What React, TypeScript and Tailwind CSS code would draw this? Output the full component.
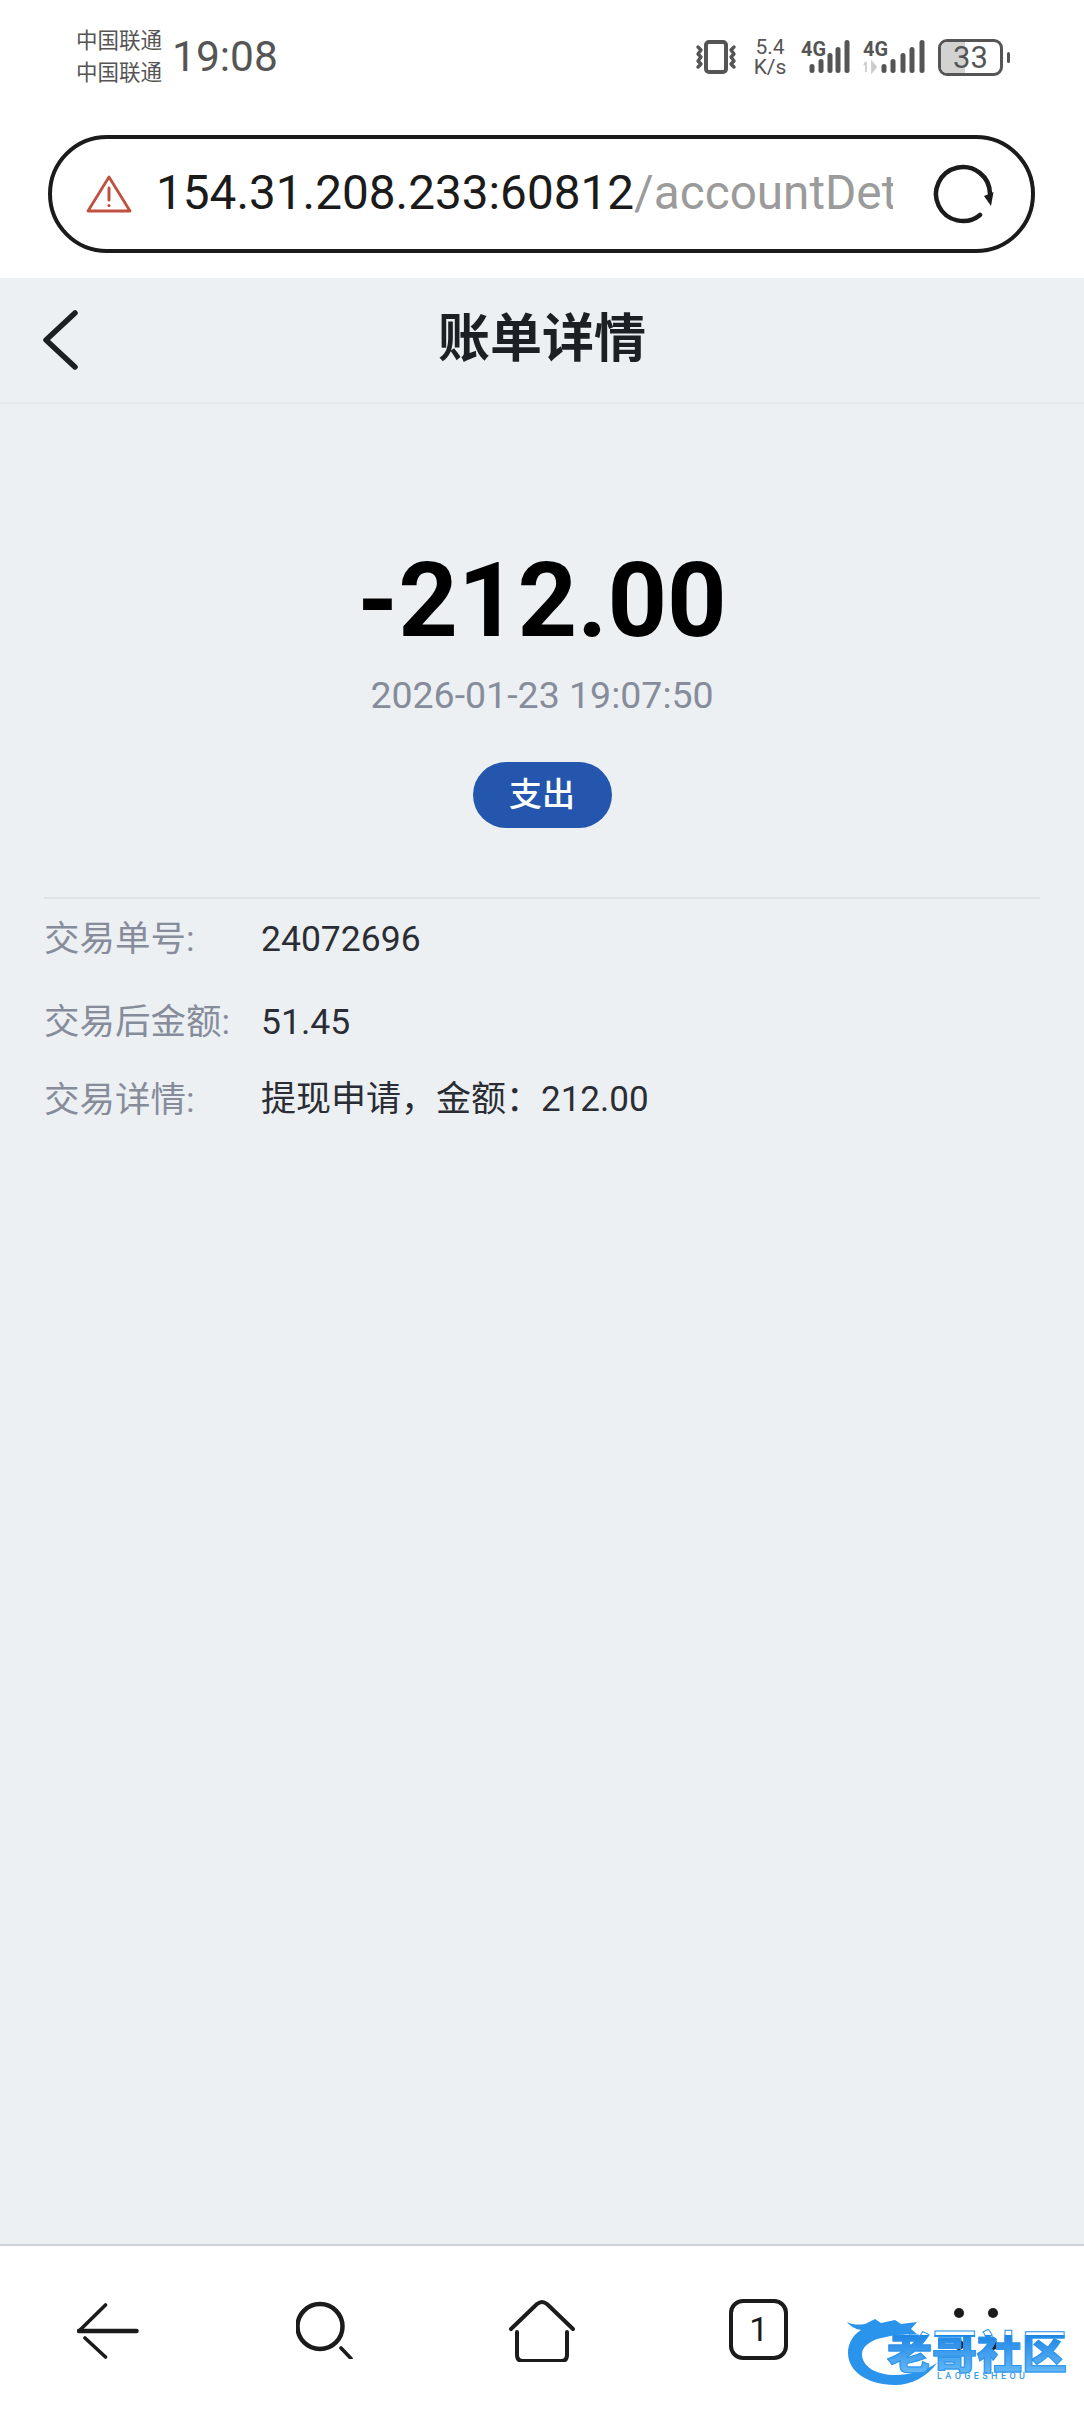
const font = "[font-family:Roboto,'Noto_Sans_CJK_SC',sans-serif]";

function Signal({ activity }: { activity?: boolean }) {
  const bars = activity
    ? [
        { x: 21, h: 9 },
        { x: 30, h: 14 },
        { x: 40, h: 20 },
        { x: 49, h: 26 },
        { x: 59, h: 33 },
      ]
    : [
        { x: 11, h: 9 },
        { x: 20, h: 14 },
        { x: 29, h: 20 },
        { x: 37, h: 26 },
        { x: 46, h: 33 },
      ];
  return (
    <svg width={activity ? 62 : 49} height="36" viewBox={activity ? "0 0 62 36" : "0 0 49 36"}>
      {bars.map((b) => (
        <rect key={b.x} x={b.x - 2.5} y={34 - b.h} width="5" height={b.h} rx="2.5" fill="#555" />
      ))}
      <text x="0" y="17" fontSize="20" fontWeight="700" fill="#555" fontFamily="Roboto, sans-serif" textLength="25" lengthAdjust="spacingAndGlyphs">
        4G
      </text>
      {activity && (
        <path d="M3 33v-10M1 26l2-3M9 23v10l4-5z" stroke="#ccc" strokeWidth="1.8" fill="#ccc" />
      )}
    </svg>
  );
}

function Vibrate() {
  return (
    <svg width="42" height="34" viewBox="0 0 42 34" fill="none" stroke="#555">
      <rect x="11" y="2" width="20" height="30" rx="3" strokeWidth="4" />
      <path d="M3 7l3 3-3 4 3 3-3 4 3 3-3 3" strokeWidth="3.4" strokeLinecap="round" strokeLinejoin="round" />
      <path d="M39 7l-3 3 3 4-3 3 3 4-3 3 3 3" strokeWidth="3.4" strokeLinecap="round" strokeLinejoin="round" />
    </svg>
  );
}

function Battery() {
  return (
    <div className="flex items-center gap-[4px]">
      <div className="relative flex h-[37px] w-[65px] items-center justify-center overflow-hidden rounded-[9px] border-[3px] border-[#555]">
        <div className="absolute inset-y-0 left-0 w-[24px] bg-[#d2d2d2]" />
        <span className="relative text-[31px] leading-none text-[#555]">33</span>
      </div>
      <div className="h-[11px] w-[3px] rounded-sm bg-[#555]" />
    </div>
  );
}

function StatusBar() {
  return (
    <div className="flex h-[114px] items-center pl-[76px] pr-[74px] text-[#555]">
      <div className="w-[88px] text-[21.5px] leading-[32px] whitespace-nowrap">
        <div>中国联通</div>
        <div>中国联通</div>
      </div>
      <div className="ml-[8px] text-[42.5px] leading-none">19:08</div>
      <div className="ml-auto flex items-center">
        <Vibrate />
        <div className="ml-[16px] w-[34px] text-center text-[21px] leading-[20px]">
          <div>5.4</div>
          <div>K/s</div>
        </div>
        <div className="ml-[14px]">
          <Signal />
        </div>
        <div className="ml-[13px]">
          <Signal activity />
        </div>
        <div className="ml-[13px]">
          <Battery />
        </div>
      </div>
    </div>
  );
}

function UrlBar() {
  return (
    <div className="bg-white pt-[21px] pb-[25px] pl-[48px] pr-[49px]">
      <div className="flex h-[118px] items-center rounded-full border-[4.5px] border-[#1b1b1b] pl-[34px] pr-[36px]">
        <svg width="46" height="40" viewBox="0 0 46 40" fill="none" stroke="#c0503f" strokeWidth="2.8" strokeLinejoin="round">
          <path d="M23 3 44 37H2z" />
          <path d="M23 14v12" strokeWidth="3" strokeLinecap="round" />
          <circle cx="23" cy="31.5" r="1.6" fill="#c0503f" stroke="none" />
        </svg>
        <div className="ml-[24px] w-[737px] overflow-hidden whitespace-nowrap text-[47.7px] leading-none">
          <span className="text-[#1b1b1b]">154.31.208.233:60812</span>
          <span className="text-[#9b9b9b]">/accountDetail</span>
        </div>
        <svg className="ml-auto" width="62" height="60" viewBox="0 0 62 60" fill="none" stroke="#1b1b1b" strokeWidth="4.5" strokeLinecap="round">
          <path d="M47 51A27 27 0 1 1 57 30" />
          <path d="M51 32 60.500 28 58 42z" fill="#1b1b1b" stroke="none" />
        </svg>
      </div>
    </div>
  );
}

function Row({ label, value, className, valueClass = "" }: { label: string; value: string; className: string; valueClass?: string }) {
  return (
    <div className={`grid grid-cols-[217px_1fr] text-[35.5px] leading-[50px] ${className}`}>
      <div className="text-[#878c9b]">{label}</div>
      <div className={`text-[#2a2d33] ${valueClass}`}>{value}</div>
    </div>
  );
}

function BottomNav() {
  return (
    <div className="grid h-[168px] grid-cols-5 items-center border-t-2 border-[#cdd2d8] bg-white">
      <div className="flex justify-center">
        <svg width="62" height="60" viewBox="0 0 62 60" fill="none" stroke="#1b1b1b" strokeWidth="3.6" strokeLinecap="round">
          <path d="M28.500 6 2 32" />
          <path d="M8 39 28.500 58" />
          <path d="M2 32h57.500" strokeWidth="4.500" />
        </svg>
      </div>
      <div className="flex justify-center">
        <svg width="58" height="60" viewBox="0 0 58 60" fill="none" stroke="#1b1b1b" strokeWidth="4.500" strokeLinecap="round">
          <circle cx="24" cy="27.500" r="22.500" />
          <path d="M45 49 55 59.500" strokeWidth="3.600" />
        </svg>
      </div>
      <div className="flex justify-center">
        <svg width="66" height="66" viewBox="0 0 66 66" fill="none" stroke="#1b1b1b" strokeWidth="4" strokeLinecap="round" strokeLinejoin="round">
          <path d="M2 33 28 8Q33 4 38 8L64 33" />
          <path d="M8 36V59Q8 65 14 65H52Q58 65 58 59V36" />
        </svg>
      </div>
      <div className="flex justify-center">
        <div className="flex h-[61px] w-[59px] items-center justify-center rounded-[14px] border-[4px] border-[#1b1b1b] text-[34px] leading-none text-[#1b1b1b]">
          1
        </div>
      </div>
      <div className="flex justify-center">
        <div className="grid grid-cols-2 gap-x-[24px] gap-y-[22px]">
          <div className="size-[10px] rounded-full bg-[#1b1b1b]" />
          <div className="size-[10px] rounded-full bg-[#1b1b1b]" />
          <div className="size-[10px] rounded-full bg-[#1b1b1b]" />
          <div className="size-[10px] rounded-full bg-[#1b1b1b]" />
        </div>
      </div>
    </div>
  );
}

function Watermark() {
  return (
    <div className="absolute bottom-[27px] left-[845px] h-[68px] w-[226px]">
      <svg className="absolute inset-0" width="226" height="68" viewBox="0 0 226 68" fill="none">
        <path
          d="M2 5C8 8 14 8 20 7L30 2 36 6 50 3 56 7 72 5 66 12 72 17 50 18 32 22C22 26 17 31 17 37 17 50 32 58 50 58 65 58 80 54 92 46 82 60 66 68 50 68 22 68 3 54 3 36 3 26 8 18 16 13 10 12 5 9 2 5Z"
          fill="#2a93ec"
        />
      </svg>
      <div className="absolute left-[42px] top-[18px] whitespace-nowrap bg-linear-to-b from-[#1c86e4] to-[#63b8f6] bg-clip-text text-[45px] leading-[38px] font-black text-transparent [-webkit-text-stroke:1px_#2a93ec]">
        老哥社区
      </div>
      <div className="absolute left-[92px] top-[54px] text-[9px] leading-[10px] font-medium tracking-[3.4px] whitespace-nowrap text-[#3a9cec]">
        LAOGESHEOU
      </div>
    </div>
  );
}

export default function App() {
  return (
    <div className={`relative flex h-[2412px] w-[1084px] flex-col overflow-hidden bg-white ${font}`}>
      <StatusBar />
      <UrlBar />
      <div className="flex flex-1 flex-col bg-[#ecf0f3]">
        <div className="grid h-[126px] grid-cols-[1fr_auto_1fr] items-center border-b-2 border-[#e7ebef]">
          <svg className="ml-[42px]" width="36" height="60" viewBox="0 0 36 60" fill="none" stroke="#1c1f23" strokeWidth="5.500" strokeLinecap="round" strokeLinejoin="round">
            <path d="M33 3 4 30l29 27" />
          </svg>
          <div className="text-[52px] leading-none font-bold text-[#1c1f23]">账单详情</div>
          <div />
        </div>
        <div className="mt-[147px] text-center text-[104px] leading-[100px] font-bold text-black">-212.00</div>
        <div className="mt-[24px] text-center text-[37.5px] leading-[40px] text-[#878c9b]">2026-01-23 19:07:50</div>
        <div className="mx-auto mt-[47px] flex h-[66px] w-[139px] items-center justify-center rounded-full bg-[#2456ad] text-[33px] font-medium text-white">
          支出
        </div>
        <div className="mx-[44px] mt-[69px] border-t-2 border-[#dfe3e8]" />
        <div className="px-[44px]">
          <Row label="交易单号:" value="24072696" className="mt-[15px]" />
          <Row label="交易后金额:" value="51.45" className="mt-[33px]" />
          <Row label="交易详情:" value="提现申请，金额：212.00" className="mt-[28px]" valueClass="text-[35px]" />
        </div>
      </div>
      <BottomNav />
      <Watermark />
    </div>
  );
}
